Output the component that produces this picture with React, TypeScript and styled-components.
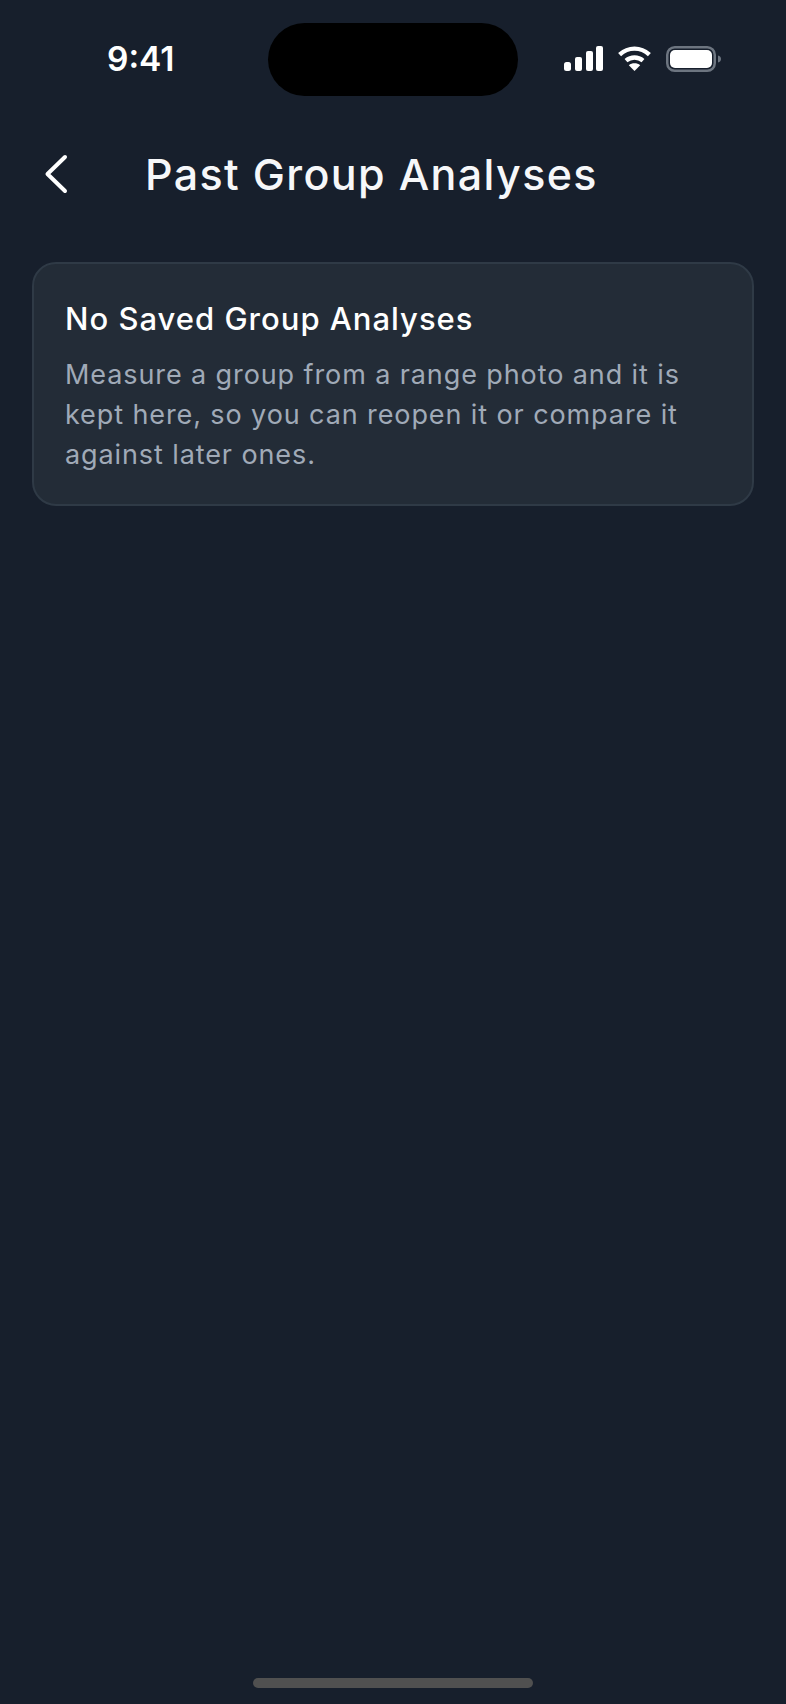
import React from "react";
import styled, { createGlobalStyle } from "styled-components";

const Global = createGlobalStyle`
  html, body { margin: 0; padding: 0; background: #171f2c; }
  * { box-sizing: border-box; }
`;

const Screen = styled.div`
  width: 786px;
  height: 1704px;
  background: #171f2c;
  display: flex;
  flex-direction: column;
  font-family: Inter, "Liberation Sans", sans-serif;
  overflow: hidden;
`;

const StatusBar = styled.div`
  height: 96px;
  padding-top: 23px;
  display: grid;
  grid-template-columns: 268px 250px 1fr;
`;

const Time = styled.div`
  padding: 17px 0 0 107px;
  font-size: 33.5px;
  line-height: 38px;
  font-weight: 600;
  color: #fff;
`;

const Island = styled.div`
  height: 73px;
  border-radius: 36.5px;
  background: #000;
`;

const StatusIcons = styled.div`
  padding: 23px 0 0 46px;
  display: flex;
  align-items: flex-start;
  gap: 15px;
`;

const Header = styled.div`
  display: flex;
  align-items: center;
  height: 76px;
  margin-top: 40px;
  padding-left: 44px;
`;

const BackIcon = styled.svg`
  width: 24px;
  height: 40px;
  flex: none;
`;

const Title = styled.h1`
  margin: 0 0 0 77px;
  font-size: 43px;
  line-height: 48px;
  font-weight: 500;
  letter-spacing: 1.35px;
  color: #f6f7f9;
  white-space: nowrap;
`;

const Card = styled.section`
  margin: 50px 32px 0 32px;
  height: 244px;
  padding: 36px 32px 0 31px;
  background: #232c37;
  border: 2px solid #2f3a46;
  border-radius: 24px;
`;

const CardTitle = styled.h2`
  margin: 0;
  font-size: 31px;
  line-height: 38px;
  font-weight: 500;
  letter-spacing: 1px;
  color: #fff;
`;

const CardBody = styled.p`
  margin: 17px 0 0;
  font-size: 27px;
  line-height: 40px;
  font-weight: 400;
  letter-spacing: 0.9px;
  color: #a0aab7;
`;

const HomeIndicator = styled.div`
  width: 280px;
  height: 10px;
  margin: auto auto 16px;
  border-radius: 5px;
  background: #505050;
`;

export default function App() {
  return (
    <Screen>
      <Global />
      <StatusBar>
        <Time>9:41</Time>
        <Island />
        <StatusIcons>
          <svg width="39" height="25" viewBox="0 0 39 25" fill="#fff">
            <rect x="0" y="16" width="7" height="9" rx="2.5" />
            <rect x="11" y="11" width="7" height="14" rx="2" />
            <rect x="22" y="5" width="7" height="20" rx="2" />
            <rect x="32" y="0" width="7" height="25" rx="2" />
          </svg>
          <svg width="33" height="25" viewBox="0 0 33 25" fill="none" stroke="#fff" strokeWidth="4.4">
            <path d="M1.6 8.6C10.4 0.6 22.6 0.6 31.4 8.6" />
            <path d="M8 14.6C13 10.4 20 10.4 25 14.6" />
            <path d="M16.5 25L10.8 19.2C14 16.6 19 16.6 22.2 19.2Z" fill="#fff" stroke="none" />
          </svg>
          <svg width="56" height="26" viewBox="0 0 56 26" fill="none">
            <rect x="1.25" y="1.25" width="47.5" height="23.5" rx="7.5" stroke="#6d7580" strokeWidth="2.5" />
            <rect x="4" y="4" width="42" height="18" rx="5" fill="#fff" />
            <path d="M52 9.5C54 10 55 11.4 55 13C55 14.6 54 16 52 16.5Z" fill="#6d7580" />
          </svg>
        </StatusIcons>
      </StatusBar>
      <Header>
        <BackIcon viewBox="0 0 24 40" fill="none">
          <path d="M21 3L3.5 20L21 37" stroke="#fff" strokeWidth="4" strokeLinecap="round" strokeLinejoin="round" />
        </BackIcon>
        <Title>Past Group Analyses</Title>
      </Header>
      <Card>
        <CardTitle>No Saved Group Analyses</CardTitle>
        <CardBody>
          Measure a group from a range photo and it is
          <br />
          kept here, so you can reopen it or compare it
          <br />
          against later ones.
        </CardBody>
      </Card>
      <HomeIndicator />
    </Screen>
  );
}
